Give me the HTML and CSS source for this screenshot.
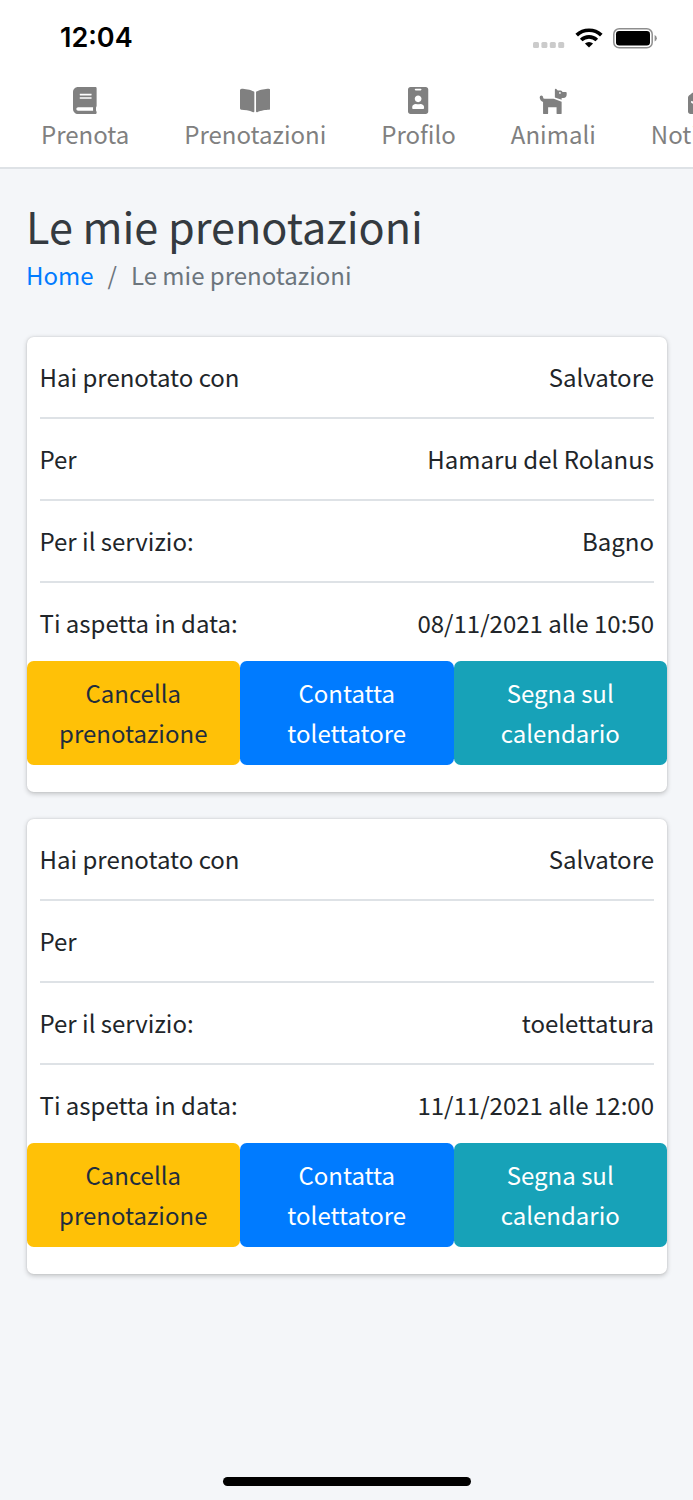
FILE: index.html
```html
<!DOCTYPE html>
<html lang="it">
<head>
<meta charset="utf-8">
<title>Le mie prenotazioni</title>
<link rel="stylesheet" href="styles.css">
</head>
<body>
<div class="screen">
  <header class="top">
    <div class="status">
      <span class="time">12:04</span>
      <div class="indicators">
        <svg class="dots" width="32" height="6" viewBox="0 0 32 6" fill="#cbcbcb"><rect width="6" height="6" rx="1.5"/><rect x="8.4" width="6" height="6" rx="1.5"/><rect x="16.8" width="6" height="6" rx="1.5"/><rect x="25.2" width="6" height="6" rx="1.5"/></svg>
        <svg class="wifi" width="28" height="20" viewBox="0 0 28 20"><g fill="none" stroke="#000" stroke-width="3.7"><path d="M1.7 7.2a17.7 17.7 0 0 1 24.6 0"/><path d="M6.2 12a11.2 11.2 0 0 1 15.6 0"/></g><path d="M14 19.6l-4.1-4.1a6 6 0 0 1 8.2 0z"/></svg>
        <svg class="battery" width="44" height="21" viewBox="0 0 44 21"><rect x=".8" y=".8" width="38.4" height="19" rx="5.4" fill="none" stroke="#8e8e8e" stroke-width="1.5"/><rect x="3" y="3" width="34" height="14.4" rx="3.2"/><path d="M41.6 7q2.2 1 2.2 3.3t-2.2 3.3z" fill="#8e8e8e"/></svg>
      </div>
    </div>
    <nav class="nav">
      <a class="nav-item"><svg class="icon" viewBox="0 0 448 512"><path d="M448 360V24c0-13.3-10.7-24-24-24H96C43 0 0 43 0 96v320c0 53 43 96 96 96h328c13.3 0 24-10.7 24-24v-16c0-7.5-3.5-14.3-8.9-18.7-4.2-15.4-4.2-59.3 0-74.7 5.4-4.3 8.9-11.1 8.9-18.6zM128 134c0-3.3 2.7-6 6-6h212c3.3 0 6 2.7 6 6v20c0 3.3-2.7 6-6 6H134c-3.3 0-6-2.7-6-6v-20zm0 64c0-3.3 2.7-6 6-6h212c3.3 0 6 2.7 6 6v20c0 3.3-2.7 6-6 6H134c-3.3 0-6-2.7-6-6v-20zm253.400 250H96c-17.700 0-32-14.300-32-32 0-17.600 14.400-32 32-32h285.400c-1.900 17.100-1.900 46.900 0 64z"/></svg><span>Prenota</span></a>
      <a class="nav-item"><svg class="icon" viewBox="0 0 576 512"><path d="M542.22 32.05c-54.8 3.11-163.72 14.43-230.96 55.59-4.64 2.84-7.27 7.89-7.27 13.17v363.87c0 11.55 12.63 18.85 23.28 13.49 69.18-34.82 169.23-44.32 218.7-46.92 16.89-.89 30.02-14.43 30.02-30.66V62.75c.01-17.71-15.35-31.74-33.77-30.7zM264.73 87.64C197.5 46.48 88.58 35.17 33.78 32.05 15.36 31.01 0 45.04 0 62.75V400.6c0 16.24 13.13 29.78 30.02 30.66 49.49 2.6 149.59 12.11 218.77 46.95 10.62 5.35 23.21-1.94 23.21-13.46V100.63c0-5.29-2.62-10.14-7.27-12.99z"/></svg><span>Prenotazioni</span></a>
      <a class="nav-item"><svg class="icon" viewBox="0 0 384 512"><path d="M336 0H48C21.5 0 0 21.5 0 48v416c0 26.5 21.5 48 48 48h288c26.5 0 48-21.5 48-48V48c0-26.5-21.5-48-48-48zM144 32h96c8.8 0 16 7.2 16 16s-7.2 16-16 16h-96c-8.8 0-16-7.2-16-16s7.2-16 16-16zm48 128c35.3 0 64 28.7 64 64s-28.7 64-64 64-64-28.7-64-64 28.7-64 64-64zm112 236.8c0 10.6-10 19.2-22.4 19.2H102.4C90 416 80 407.4 80 396.8v-19.2c0-31.8 30.1-57.6 67.2-57.6h5c12.3 5.1 25.7 8 39.8 8s27.6-2.9 39.8-8h5c37.1 0 67.2 25.8 67.2 57.6v19.2z"/></svg><span>Profilo</span></a>
      <a class="nav-item"><svg class="icon" viewBox="0 0 576 512"><path d="M298.06,224,448,277.55V496a16,16,0,0,1-16,16H368a16,16,0,0,1-16-16V384H192V496a16,16,0,0,1-16,16H112a16,16,0,0,1-16-16V282.09C58.84,268.84,32,233.66,32,192a32,32,0,0,1,64,0,32.06,32.06,0,0,0,32,32ZM544,112v32a64,64,0,0,1-64,64H448v35.58L320,197.87V48c0-14.25,17.22-21.39,27.31-11.31L374.59,64h53.63c10.91,0,23.75,7.92,28.62,17.69L464,96h64A16,16,0,0,1,544,112Zm-112,0a16,16,0,1,0-16,16A16,16,0,0,0,432,112Z"/></svg><span>Animali</span></a>
      <a class="nav-item"><svg class="icon" viewBox="0 0 512 512"><path d="M512 464c0 26.51-21.49 48-48 48H48c-26.51 0-48-21.49-48-48V200.724a48 48 0 0 1 18.387-37.776c24.913-19.529 45.501-35.365 164.2-121.511C199.412 29.17 232.797-.347 256 .003c23.198-.354 56.596 29.172 73.413 41.433 118.687 86.137 139.303 101.995 164.2 121.512A48 48 0 0 1 512 200.724V464zm-65.666-196.605c-2.563-3.728-7.7-4.595-11.339-1.907-22.845 16.873-55.462 40.705-105.582 77.079-16.825 12.266-50.21 41.781-73.413 41.43-23.211.344-56.559-29.143-73.413-41.43-50.114-36.37-82.734-60.204-105.582-77.079-3.639-2.688-8.776-1.821-11.339 1.907l-9.072 13.196a7.998 7.998 0 0 0 1.839 10.967c22.887 16.899 55.454 40.69 105.303 76.868 20.274 14.781 56.524 47.813 92.264 47.573 35.724.242 71.961-32.771 92.264-47.573 49.85-36.179 82.418-59.97 105.303-76.868a7.998 7.998 0 0 0 1.839-10.967l-9.072-13.196z"/></svg><span>Notifiche</span></a>
    </nav>
  </header>
  <main class="content">
    <h1 class="title">Le mie prenotazioni</h1>
    <div class="crumbs"><a class="home">Home</a><span>/</span><span>Le mie prenotazioni</span></div>
    <section class="card">
      <div class="row"><span>Hai prenotato con</span><span>Salvatore</span></div>
      <div class="row"><span>Per</span><span>Hamaru del Rolanus</span></div>
      <div class="row"><span>Per il servizio:</span><span>Bagno</span></div>
      <div class="row"><span>Ti aspetta in data:</span><span>08/11/2021 alle 10:50</span></div>
      <div class="actions">
        <button class="btn warning">Cancella<br>prenotazione</button>
        <button class="btn primary">Contatta<br>tolettatore</button>
        <button class="btn info">Segna sul<br>calendario</button>
      </div>
    </section>
    <section class="card">
      <div class="row"><span>Hai prenotato con</span><span>Salvatore</span></div>
      <div class="row"><span>Per</span></div>
      <div class="row"><span>Per il servizio:</span><span>toelettatura</span></div>
      <div class="row"><span>Ti aspetta in data:</span><span>11/11/2021 alle 12:00</span></div>
      <div class="actions">
        <button class="btn warning">Cancella<br>prenotazione</button>
        <button class="btn primary">Contatta<br>tolettatore</button>
        <button class="btn info">Segna sul<br>calendario</button>
      </div>
    </section>
  </main>
  <footer class="home-bar"><div class="pill"></div></footer>
</div>
</body>
</html>
```
FILE: styles.css
```css
* { box-sizing: border-box; }
body {
  margin: 0;
  font-family: "Noto Sans CJK JP", "Noto Sans", sans-serif;
  font-size: 24px;
  line-height: 40px;
  color: #212529;
  background: #f4f6f9;
}
.screen { width: 693px; height: 1500px; overflow: hidden; display: flex; flex-direction: column; }
.top { height: 169px; flex: none; background: #fff; border-bottom: 2px solid #dee2e6; }
.status { height: 76px; display: flex; justify-content: space-between; padding: 0 36px 0 60px; }
.time { font: 600 27px/76px Inter, sans-serif; color: #000; }
.indicators { display: flex; align-items: flex-start; }
.dots { margin: 42px 10px 0 0; }
.wifi { margin: 28px 10px 0 0; }
.battery { margin-top: 28px; }
.nav { display: flex; gap: 55px; padding: 10px 0 0 41px; color: #808080; white-space: nowrap; }
.nav-item { flex: none; display: flex; flex-direction: column; align-items: center; }
.icon { height: 27px; fill: currentColor; display: block; margin: 1px 0 0; }
.content { flex: 1; padding: 32px 26px 0; }
.title { margin: 0; font-size: 43.2px; line-height: 48px; font-weight: 400; color: #343a40; }
.crumbs { display: flex; gap: 14px; margin: 6px 0 42px; color: #6c757d; }
.home { color: #007bff; }
.card {
  height: 455px;
  margin: 0 0 27px .5px;
  width: 640.5px;
  background: #fff;
  border-radius: 6.7px;
  box-shadow: 0 0 1.7px rgba(0,0,0,.125), 0 1.7px 5px rgba(0,0,0,.2);
}
.row { display: flex; justify-content: space-between; height: 82px; margin: 0 13px; padding-top: 20px; border-bottom: 2px solid #dee2e6; }
.row:nth-child(4) { height: 78px; border: 0; }
.actions { display: flex; }
.btn { flex: 1; height: 104px; padding: 0; border: 0; border-radius: 6.7px; font: inherit; color: #fff; }
.warning { background: #ffc107; color: #1f2d3d; }
.primary { background: #007bff; }
.info { background: #17a2b8; }
.home-bar { height: 23px; flex: none; display: flex; justify-content: center; }
.pill { width: 248px; height: 9px; border-radius: 5px; background: #000; }
```
